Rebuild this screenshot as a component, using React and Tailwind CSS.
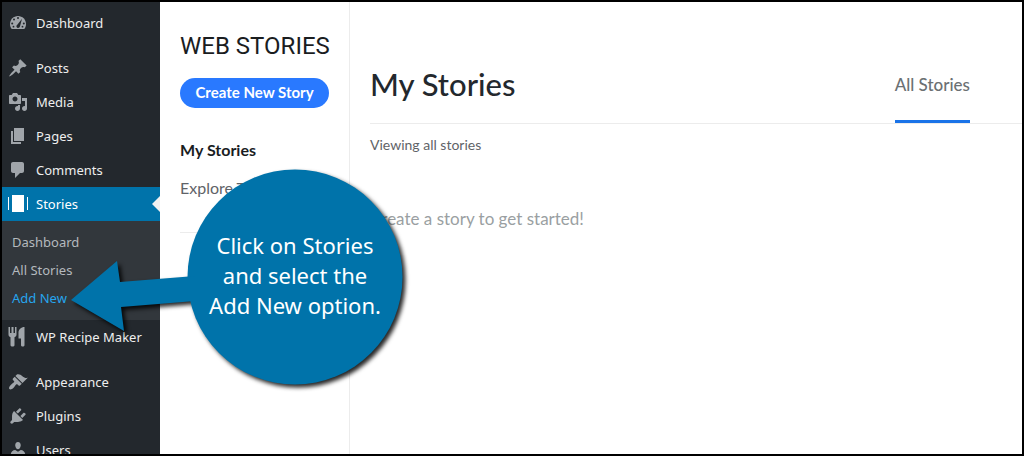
const ICONS = {
  post: "M10.44 3.02l1.82-1.82 6.36 6.35-1.83 1.82c-1.05-.68-2.48-.57-3.41.36l-.75.75c-.92.93-1.04 2.35-.35 3.41l-1.83 1.82-2.41-2.41-2.8 2.79c-.42.42-3.38 2.71-3.8 2.29s1.86-3.39 2.28-3.81l2.79-2.79L4.1 9.36l1.83-1.82c1.05.69 2.48.57 3.4-.36l.75-.75c.93-.92 1.05-2.35.36-3.41z",
  media: "M13 11V4c0-.55-.45-1-1-1h-1.67L9 1H5L3.67 3H2c-.55 0-1 .45-1 1v7c0 .55.45 1 1 1h10c.55 0 1-.45 1-1zM7 4.5c1.38 0 2.5 1.12 2.5 2.5S8.38 9.5 7 9.5 4.5 8.38 4.5 7 5.62 4.5 7 4.5zM14 6h5v10.5c0 1.38-1.12 2.5-2.5 2.5S14 17.88 14 16.5s1.12-2.5 2.5-2.5c.17 0 .34.02.5.05V9h-3V6zm-4 8.05V13h2v3.5c0 1.38-1.12 2.5-2.5 2.5S7 17.88 7 16.5 8.12 14 9.5 14c.17 0 .34.02.5.05z",
  page: "M6 15V2h10v13H6zm-1 1h8v2H3V5h2v11z",
  comment: "M5 2h9c1.1 0 2 .9 2 2v7c0 1.1-.9 2-2 2h-2l-5 5v-5H5c-1.1 0-2-.9-2-2V4c0-1.1.9-2 2-2z",
  stories: "M4 1h12v17H4zM0 3h1v13H0zM19 3h1v13h-1z",
  recipe: "M.500 0H2v6h1.500V0h2v6H7V0h1.500v7.500c0 1.500-.8 2.300-2 2.800v8c0 1.600-4 1.600-4 0v-8c-1.200-.5-2-1.300-2-2.800zM16.500 0v18.300c0 1.600-3.500 1.600-3.500 0V11.500h-2.500V5.500c0-3 2.500-5.500 6-5.500z",
  appearance: "M14.48 11.06L7.41 3.99l1.5-1.5c.5-.56 2.3-.47 3.51.32 1.21.8 1.43 1.28 2.91 2.1 1.18.64 2.45 1.26 4.45.85zm-.71.71L6.7 4.7 4.93 6.47c-.39.39-.39 1.02 0 1.41l1.06 1.06c.39.39.39 1.03 0 1.42-.6.6-1.43 1.11-2.21 1.69-.35.26-.7.53-1.01.84C1.43 14.23.4 16.08 1.4 17.07c.99 1 2.84-.03 4.18-1.36.31-.31.58-.66.85-1.02.57-.78 1.08-1.61 1.69-2.21.39-.39 1.02-.39 1.41 0l1.06 1.06c.39.39 1.02.39 1.41 0z",
  plugin: "M13.11 4.36L9.87 7.6 8 5.73l3.24-3.24c.35-.34 1.05-.2 1.56.32.52.51.66 1.21.31 1.55zm-8 1.77l.91-1.12 9.01 9.01-1.19.84c-.71.71-2.63 1.16-3.82 1.16H6.14L4.9 17.26c-.59.59-1.54.59-2.12 0-.59-.58-.59-1.53 0-2.12l1.24-1.24v-3.88c0-1.13.4-3.19 1.09-3.89zm7.26 3.97l3.24-3.24c.34-.35 1.04-.21 1.55.31.52.51.66 1.21.31 1.55l-3.24 3.25z",
  user: "M10 9.25c-2.27 0-2.73-3.44-2.73-3.44C7 4.02 7.82 2 9.97 2c2.16 0 2.98 2.02 2.71 3.81 0 0-.41 3.44-2.68 3.44zm0 2.57L12.72 10c2.39 0 4.52 2.33 4.52 4.53v2.49s-3.65 1.13-7.24 1.13c-3.65 0-7.24-1.13-7.24-1.13v-2.49c0-2.25 1.94-4.48 4.47-4.48z",
};

function GaugeIcon() {
  return (
    <svg viewBox="0 0 20 20" className="size-5 shrink-0 text-[#a0a5aa]" aria-hidden="true">
      <path fill="currentColor" d="M3.760 16h12.480c1.100-1.340 1.760-3.090 1.760-5 0-4.420-3.580-8-8-8s-8 3.580-8 8c0 1.910.66 3.660 1.760 5z" />
      <g fill="#23282d">
        <circle cx="10" cy="5" r="1" />
        <circle cx="6" cy="6.500" r="1" />
        <circle cx="4.200" cy="10.500" r="1" />
        <circle cx="15.800" cy="10.500" r="1" />
        <circle cx="5.500" cy="13.700" r="0.900" />
        <circle cx="14.500" cy="13.700" r="0.900" />
        <path d="M14 5.700l-1.900 7.300c-.3 1.500-1.300 2.100-2.400 1.900-1.100-.3-1.600-1.400-1.100-2.400.2-.4.500-.7.900-.9z" />
      </g>
    </svg>
  );
}

function Icon({ name }) {
  if (name === "dashboard") return <GaugeIcon />;
  return (
    <svg
      viewBox="0 0 20 20"
      className={name === "stories" ? "size-5 shrink-0 text-white" : "size-5 shrink-0 text-[#a0a5aa]"}
      aria-hidden="true"
    >
      <path fill="currentColor" fillRule="evenodd" d={ICONS[name]} />
    </svg>
  );
}

function MenuItem({ icon, label, active }) {
  return (
    <li>
      <a
        href="#"
        aria-current={active ? "page" : undefined}
        className={
          active
            ? "relative flex h-[34px] items-center gap-2 bg-[#0073aa] pl-1.5 text-white"
            : "flex h-[34px] items-center gap-2 pl-1.5 text-[#eeeeee]"
        }
      >
        <Icon name={icon} />
        <span className="pt-0.5 whitespace-nowrap">{label}</span>
        {active && (
          <span className="absolute inset-y-0 right-0 my-auto size-0 border-y-8 border-r-8 border-y-transparent border-r-[#f1f1f1]" />
        )}
      </a>
    </li>
  );
}

function Sidebar() {
  return (
    <nav
      aria-label="Admin menu"
      className="w-[158px] shrink-0 bg-[#23282d] pt-1 font-['Noto_Sans',sans-serif] text-[13px]"
    >
      <ul>
        <MenuItem icon="dashboard" label="Dashboard" />
      </ul>
      <ul className="mt-[11px]">
        <MenuItem icon="post" label="Posts" />
        <MenuItem icon="media" label="Media" />
        <MenuItem icon="page" label="Pages" />
        <MenuItem icon="comment" label="Comments" />
        <MenuItem icon="stories" label="Stories" active />
      </ul>
      <ul className="bg-[#32373c] px-2.5 pt-2 pb-[7px] text-[#b4b9be]">
        <li><a href="#" className="flex h-7 items-center">Dashboard</a></li>
        <li><a href="#" className="flex h-7 items-center">All Stories</a></li>
        <li><a href="#" className="flex h-7 items-center text-[#26a5ee]">Add New</a></li>
      </ul>
      <ul>
        <MenuItem icon="recipe" label="WP Recipe Maker" />
      </ul>
      <ul className="mt-[11px]">
        <MenuItem icon="appearance" label="Appearance" />
        <MenuItem icon="plugin" label="Plugins" />
        <MenuItem icon="user" label="Users" />
      </ul>
    </nav>
  );
}

function StoriesPanel() {
  return (
    <aside className="w-[190px] shrink-0 border-r border-[#ececec] px-5 pt-7 text-[#1a1d1f]">
      <div className="text-center font-['Roboto',sans-serif] text-2xl leading-8 whitespace-nowrap">WEB STORIES</div>
      <button
        type="button"
        className="mt-4 h-[30px] w-full rounded-full bg-[#2979ff] pb-0.5 text-[15px] font-bold whitespace-nowrap text-white"
      >
        Create New Story
      </button>
      <nav aria-label="Stories" className="mt-8 border-b border-[#ececec] pb-[34px]">
        <a href="#" className="block text-base leading-5 font-bold">My Stories</a>
        <a href="#" className="mt-[18px] block text-base leading-5 whitespace-nowrap text-[#5f6368]">Explore Templates</a>
      </nav>
    </aside>
  );
}

function Callout() {
  return (
    <div className="pointer-events-none absolute top-[167px] left-[69px] h-[216px] w-[332px]">
      <svg viewBox="0 0 332 216" className="size-full overflow-visible drop-shadow-[3px_3px_2px_rgba(0,0,0,0.85)]" aria-hidden="true">
        <g fill="#0073aa">
          <circle cx="224" cy="108" r="107.500" />
          <path d="M0 131L46 92L49 113L124 107V132L50 138L53 162z" />
        </g>
      </svg>
      <p className="absolute inset-y-0 right-0 flex w-[216px] items-center justify-center pb-1 text-center font-['Noto_Sans',sans-serif] text-[22px] leading-[30px] whitespace-nowrap text-white">
        Click on Stories
        <br />
        and select the
        <br />
        Add New option.
      </p>
    </div>
  );
}

export default function App() {
  return (
    <div className="relative flex h-screen overflow-hidden border-2 border-black bg-white font-['Lato',sans-serif]">
      <Sidebar />
      <StoriesPanel />
      <main className="min-w-0 flex-1 pl-5">
        <header className="flex h-[122px] items-stretch justify-between border-b border-[#ececec] pr-[52px]">
          <h1 className="pt-[62px] text-[31px] leading-10 font-medium text-[#23282d]">My Stories</h1>
          <a href="#" className="border-b-[3px] border-[#1a73e8] pt-[73px] text-[17px] leading-5 font-medium text-[#6b7073]">
            All Stories
          </a>
        </header>
        <p className="mt-[11px] text-sm leading-5 text-[#5f6368]">Viewing all stories</p>
        <p className="mt-[52px] text-[17px] leading-6 text-[#9a9fa2]">Create a story to get started!</p>
      </main>
      <Callout />
    </div>
  );
}
